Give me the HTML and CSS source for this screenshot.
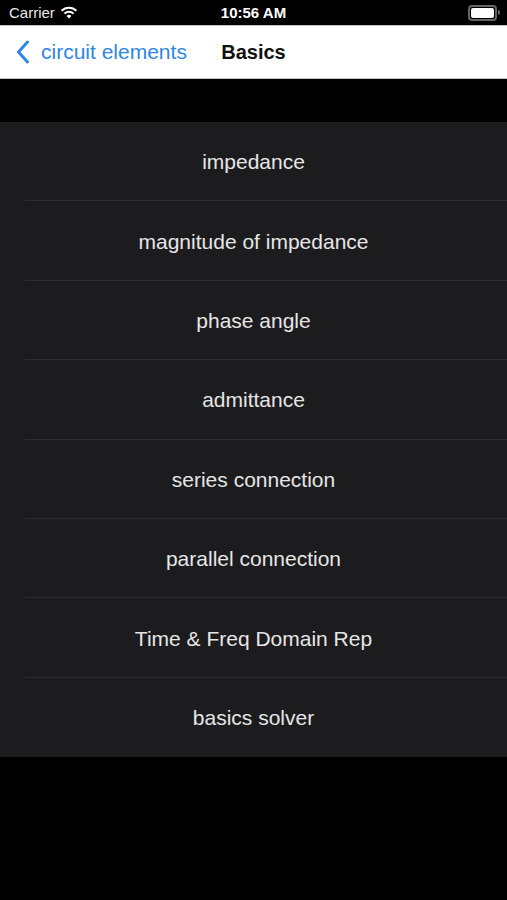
FILE: index.html
```html
<!DOCTYPE html>
<html lang="en">
<head>
	<meta charset="UTF-8">
	<title>Basics</title>
	<link rel="stylesheet" href="styles.css">
</head>
<body>
	<div class="status">
		<div class="carrier">Carrier
			<svg class="wifi" width="18" height="13" viewBox="0 0 18 13">
				<path d="M9 12.5 L6.6 9.9 A3.4 3.4 0 0 1 11.4 9.9 Z" fill="#fff"/>
				<path d="M4.4 7.6 A6.6 6.6 0 0 1 13.6 7.6" stroke="#fff" stroke-width="2" fill="none"/>
				<path d="M1.6 4.8 A10.5 10.5 0 0 1 16.4 4.8" stroke="#fff" stroke-width="2" fill="none"/>
			</svg>
		</div>
		<div class="time">10:56 AM</div>
		<div class="battery">
			<div class="battery-body"><div class="battery-fill"></div></div>
			<div class="battery-tip"></div>
		</div>
	</div>
	<div class="nav">
		<div class="back">
			<svg width="14" height="24" viewBox="0 0 14 24">
				<path d="M11.5 2 L2.5 12 L11.5 22" stroke="#2f86e8" stroke-width="3" fill="none" stroke-linecap="round" stroke-linejoin="round"/>
			</svg>
			<span>circuit elements</span>
		</div>
		<div class="title">Basics</div>
	</div>
	<ul class="list">
		<li>impedance</li>
		<li>magnitude of impedance</li>
		<li>phase angle</li>
		<li>admittance</li>
		<li>series connection</li>
		<li>parallel connection</li>
		<li>Time &amp; Freq Domain Rep</li>
		<li>basics solver</li>
	</ul>
</body>
</html>
```
FILE: styles.css
```css
html, body{
	margin:0;
	padding:0;
	background:#000;
	font-family:"Liberation Sans", Arial, sans-serif;
}
.status{
	height:25px;
	display:flex;
	align-items:center;
	justify-content:space-between;
	padding:0 7px 0 9px;
	color:#fff;
	font-size:15px;
	border-bottom:1px solid #c8c8c8;
	position:relative;
}
.carrier{
	display:flex;
	align-items:center;
	gap:5px;
	color:#e8e8e8;
}
.time{
	position:absolute;
	left:0;
	right:0;
	text-align:center;
	font-weight:bold;
	font-size:15px;
}
.battery{
	display:flex;
	align-items:center;
}
.battery-body{
	width:23px;
	height:10px;
	border:2px solid #666;
	border-radius:4px;
	padding:1px;
	box-sizing:content-box;
}
.battery-fill{
	width:100%;
	height:100%;
	background:#fff;
	border-radius:2px;
}
.battery-tip{
	width:2px;
	height:5px;
	background:#666;
	border-radius:0 2px 2px 0;
	margin-left:1px;
}
.nav{
	height:52px;
	background:#fff;
	display:flex;
	align-items:center;
	position:relative;
	border-bottom:1px solid #c8c8c8;
}
.back{
	display:flex;
	align-items:center;
	gap:11px;
	padding-left:16px;
	color:#2f86e8;
	font-size:21px;
}
.title{
	position:absolute;
	left:0;
	right:0;
	text-align:center;
	font-weight:bold;
	font-size:20px;
	color:#111;
	pointer-events:none;
}
.list{
	list-style:none;
	margin:43px 0 0;
	padding:0;
	background:#1c1c1e;
}
.list li{
	height:78.4px;
	box-sizing:border-box;
	height:79.4px;
	padding-top:2px;
	display:flex;
	align-items:center;
	justify-content:center;
	color:#e6e6e6;
	font-size:21px;
	border-bottom:1px solid #2c2c2e;
	margin-left:25px;
	padding-right:25px;
}
.list li:last-child{
	border-bottom:none;
}
```
